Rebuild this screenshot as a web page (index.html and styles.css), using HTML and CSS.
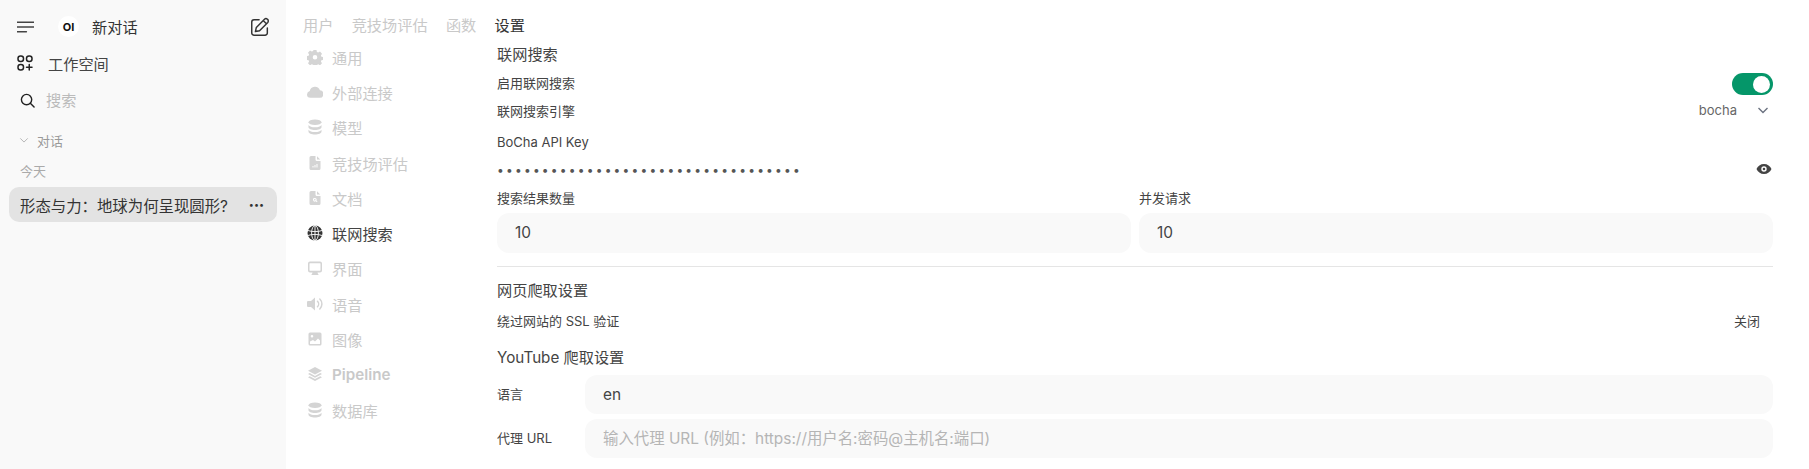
FILE: index.html
```html
<!DOCTYPE html>
<html lang="zh-CN">
<head>
    <meta charset="UTF-8">
    <title>设置</title>
    <link rel="stylesheet" href="styles.css">
</head>
<body>
    <aside class="sidebar">
        <div class="side-top">
            <svg class="icon-menu" viewBox="0 0 18 14" fill="none" stroke="#444" stroke-width="1.5" stroke-linecap="round"><path d="M0 2h18M0 7h18M0 12h10"/></svg>
            <span class="logo">OI</span>
            <span class="new-chat">新对话</span>
            <svg class="icon-edit" viewBox="0 0 24 24" fill="none" stroke="#333" stroke-width="1.600" stroke-linecap="round" stroke-linejoin="round"><path d="M20 3.500a2.200 2.200 0 0 0-3.100 0L8 12.500 7 17l4.500-1L20.500 7a2.400 2.400 0 0 0-.5-3.500zM15.500 5l3.500 3.500"/><path d="M11 4H5.500A2.500 2.500 0 0 0 3 6.500v12A2.500 2.500 0 0 0 5.500 21h12a2.500 2.500 0 0 0 2.500-2.500V13"/></svg>
        </div>
        <div class="side-row workspace">
            <svg viewBox="0 0 16 16" fill="none" stroke="#222" stroke-width="1.500" stroke-linecap="round"><rect x="1" y="1" width="5.500" height="5.500" rx="2.500"/><rect x="9.500" y="1" width="5.500" height="5.500" rx="2.500"/><rect x="1" y="9.500" width="5.500" height="5.500" rx="2.500"/><path d="M12.250 9.500v5.500M9.500 12.250h5.500"/></svg>
            <span>工作空间</span>
        </div>
        <div class="side-row search">
            <svg viewBox="0 0 16 16" fill="none" stroke="#222" stroke-width="1.500" stroke-linecap="round"><circle cx="7" cy="7" r="5.500"/><path d="M11 11l4 4"/></svg>
            <span>搜索</span>
        </div>
        <div class="side-group">
            <svg viewBox="0 0 12 12" fill="none" stroke="#aaa" stroke-width="1"><path d="M1.500 4l4.500 4.500L10.500 4"/></svg>
            <span>对话</span>
        </div>
        <div class="side-day">今天</div>
        <div class="chat-item">
            <span>形态与力：地球为何呈现圆形?</span>
            <span class="chat-more">•••</span>
        </div>
    </aside>

    <main class="main">
        <nav class="tabs">
            <span>用户</span>
            <span>竞技场评估</span>
            <span>函数</span>
            <span class="tab-on">设置</span>
        </nav>
        <div class="settings">
            <ul class="menu">
                <li><svg viewBox="0 0 16 16"><path fill-rule="evenodd" d="M6.500 1h3l.4 2 1.300.6 1.800-1 2 2.100-1.100 1.800.5 1.300 2 .4v2.600l-2 .5-.5 1.200 1.100 1.800-2 2-1.800-1-1.300.6-.4 1.900h-3l-.4-2-1.300-.5-1.800 1-2-2 1.100-1.800-.5-1.300-2-.4V7.200l2-.4.500-1.300-1.100-1.800 2-2.100 1.800 1 1.300-.6zM8 6a2.300 2.300 0 1 0 0 4.600A2.300 2.300 0 0 0 8 6z"/></svg>通用</li>
                <li><svg viewBox="0 0 16 16"><path d="M0 10.500A3.700 3.700 0 0 1 2.800 7 5.200 5.200 0 0 1 12.900 6.300 3.700 3.700 0 0 1 12.300 13.800H3.500A3.400 3.400 0 0 1 0 10.500z"/></svg>外部连接</li>
                <li><svg viewBox="0 0 16 16"><ellipse cx="8" cy="3.300" rx="6.500" ry="2.800"/><path d="M1.500 6c1 1.500 3.500 2.300 6.500 2.300s5.500-.8 6.500-2.300v2.200c0 1.600-2.900 2.800-6.500 2.800s-6.500-1.200-6.500-2.800zM1.500 10.800c1 1.500 3.500 2.300 6.500 2.300s5.500-.8 6.500-2.300v2c0 1.600-2.900 2.800-6.500 2.800s-6.500-1.200-6.500-2.800z"/></svg>模型</li>
                <li><svg viewBox="0 0 16 16"><path fill-rule="evenodd" d="M4 1h4.500v3.500A1.500 1.500 0 0 0 10 6h3.500v7.500A1.500 1.500 0 0 1 12 15H4a1.500 1.500 0 0 1-1.500-1.500v-11A1.500 1.500 0 0 1 4 1zM10 1.300 13.200 4.500H10zM5.500 11v1.500h1V11zM7.500 10v2.500h1V10zM9.500 9v3.500h1V9z"/></svg>竞技场评估</li>
                <li><svg viewBox="0 0 16 16"><path fill-rule="evenodd" d="M4 1h4.500v3.500A1.500 1.500 0 0 0 10 6h3.500v7.500A1.500 1.500 0 0 1 12 15H4a1.500 1.500 0 0 1-1.500-1.500v-11A1.500 1.500 0 0 1 4 1zM10 1.300 13.200 4.500H10zM7.800 8a1.800 1.800 0 1 0 1 3.300l1 1 .7-.7-1-1A1.800 1.800 0 0 0 7.800 8zm0 1a.8.8 0 1 1 0 1.600.8.8 0 0 1 0-1.600z"/></svg>文档</li>
                <li class="menu-on"><svg viewBox="0 0 16 16"><circle cx="8" cy="8" r="7.500"/><g fill="none" stroke="#fff" stroke-width=".9"><ellipse cx="8" cy="8" rx="3.400" ry="7.500"/><path d="M8 .5v15M1 5.500c2 .8 4.400 1.100 7 1.100s5-.3 7-1.100M1 10.500c2-.8 4.400-1.100 7-1.100s5 .3 7 1.100"/></g></svg>联网搜索</li>
                <li><svg viewBox="0 0 16 16"><path fill-rule="evenodd" d="M3 1.500h10a2 2 0 0 1 2 2v7a2 2 0 0 1-2 2h-2.500l.4 1.200.6.800v.5H4.500v-.5l.6-.8.4-1.200H3a2 2 0 0 1-2-2v-7a2 2 0 0 1 2-2zm0 1.800a.5.5 0 0 0-.5.5v6.400c0 .3.200.5.500.5h10c.3 0 .5-.2.500-.5V3.800a.5.5 0 0 0-.5-.5z"/></svg>界面</li>
                <li><svg viewBox="0 0 16 16"><path d="M8 1.500v13L4 11H1a1 1 0 0 1-1-1V6a1 1 0 0 1 1-1h3z"/><path d="M10.500 5.200a4 4 0 0 1 0 5.600M12.800 3a7 7 0 0 1 0 10" fill="none" stroke="#d4d4d4" stroke-width="1.500" stroke-linecap="round"/></svg>语音</li>
                <li><svg viewBox="0 0 16 16"><path fill-rule="evenodd" d="M3 1.500h10A1.500 1.500 0 0 1 14.500 3v10a1.500 1.500 0 0 1-1.500 1.500H3A1.500 1.500 0 0 1 1.500 13V3A1.500 1.500 0 0 1 3 1.500zM3 10.500V13h10V9.500l-2-2-3 3-2-1.500zM5 4a1.300 1.300 0 1 0 0 2.600A1.300 1.300 0 0 0 5 4z"/></svg>图像</li>
                <li class="menu-bold"><svg viewBox="0 0 16 16"><path d="M8 1l7 3.800-7 3.800-7-3.800zM2.700 7l5.300 2.900L13.300 7 15 8l-7 3.800L1 8zM2.700 10.200 8 13l5.300-2.800L15 11.200 8 15l-7-3.800z"/></svg>Pipeline</li>
                <li><svg viewBox="0 0 16 16"><ellipse cx="8" cy="3.300" rx="6.500" ry="2.800"/><path d="M1.500 6c1 1.500 3.500 2.300 6.500 2.300s5.500-.8 6.500-2.300v2.200c0 1.600-2.900 2.800-6.500 2.800s-6.500-1.200-6.500-2.800zM1.500 10.800c1 1.500 3.500 2.300 6.500 2.300s5.500-.8 6.500-2.300v2c0 1.600-2.900 2.800-6.500 2.800s-6.500-1.200-6.500-2.800z"/></svg>数据库</li>
            </ul>
            <section class="panel">
                <h3 class="head-first">联网搜索</h3>
                <div class="row row-toggle">
                    <span class="row-text">启用联网搜索</span>
                    <span class="toggle"><span class="knob"></span></span>
                </div>
                <div class="row row-engine">
                    <span>联网搜索引擎</span>
                    <span class="select">bocha
                        <svg viewBox="0 0 12 12" fill="none" stroke="#6b7280" stroke-width="1.400"><path d="M1.500 4l4.500 4.500L10.500 4"/></svg>
                    </span>
                </div>
                <div class="label label-key">BoCha API Key</div>
                <div class="row row-key">
                    <span class="dots">••••••••••••••••••••••••••••••••••</span>
                    <svg class="eye" viewBox="0 0 16 16" fill="#444"><path fill-rule="evenodd" d="M8 3c3.500 0 6.300 2.100 7.500 5-1.200 2.900-4 5-7.500 5S1.700 10.900.5 8C1.700 5.100 4.500 3 8 3zm0 2.300a2.700 2.700 0 1 0 0 5.400 2.700 2.700 0 0 0 0-5.400zM8 6.700a1.300 1.300 0 1 1 0 2.600 1.300 1.300 0 0 1 0-2.600z"/></svg>
                </div>
                <div class="two-col">
                    <div>
                        <div class="label">搜索结果数量</div>
                        <div class="field">10</div>
                    </div>
                    <div>
                        <div class="label">并发请求</div>
                        <div class="field">10</div>
                    </div>
                </div>
                <hr class="line">
                <h3>网页爬取设置</h3>
                <div class="row row-ssl">
                    <span>绕过网站的 SSL 验证</span>
                    <span class="off">关闭</span>
                </div>
                <h3 class="head-yt">YouTube 爬取设置</h3>
                <div class="row-field">
                    <span class="field-name">语言</span>
                    <div class="field">en</div>
                </div>
                <div class="row-field">
                    <span class="field-name">代理 URL</span>
                    <div class="field field-empty">输入代理 URL (例如：https://用户名:密码@主机名:端口)</div>
                </div>
            </section>
        </div>
    </main>
</body>
</html>
```

FILE: styles.css
```css
* {
    box-sizing: border-box;
}
html, body {
    margin: 0;
    height: 469px;
    overflow: hidden;
}
body {
    display: flex;
    background: #fff;
    color: #444;
    font-family: Inter, "Noto Sans CJK SC", sans-serif;
    font-size: 15.2px;
}
svg {
    display: block;
    flex: none;
}

/* sidebar */
.sidebar {
    width: 286px;
    flex: none;
    background: #f9f9f9;
    padding: 0 9px;
}
.side-top {
    display: flex;
    align-items: center;
    height: 53px;
    padding-left: 8px;
    color: #333;
}
.icon-menu {
    width: 17px;
    height: 14px;
}
.logo {
    width: 21px;
    height: 21px;
    margin-left: 24px;
    padding-top: 2px;
    border-radius: 50%;
    background: #fff;
    font-size: 11px;
    font-weight: 700;
    line-height: 19px;
    text-align: center;
    color: #111;
}
.new-chat {
    margin-left: 13px;
    padding-bottom: 2px;
}
.icon-edit {
    width: 22px;
    height: 22px;
    margin-left: auto;
    margin-right: 6px;
}
.side-row {
    display: flex;
    align-items: center;
    height: 36px;
    padding-left: 8px;
}
.side-row svg {
    width: 16px;
    height: 16px;
}
.workspace {
    margin-top: -8px;
    gap: 15px;
}
.search {
    gap: 11px;
    color: #bbb;
    padding-left: 11px;
}
.side-row.search svg {
    width: 15px;
    height: 15px;
    margin-top: 3px;
}
.side-group {
    display: flex;
    align-items: center;
    gap: 8px;
    height: 20px;
    margin-top: 13px;
    padding-left: 10px;
    font-size: 13px;
    color: #999;
}
.side-group svg {
    width: 10px;
    height: 10px;
}
.side-day {
    height: 20px;
    margin-top: 11px;
    padding-left: 11px;
    font-size: 13px;
    line-height: 20px;
    color: #aaa;
}
.chat-item {
    display: flex;
    align-items: center;
    justify-content: space-between;
    height: 35px;
    margin-top: 6px;
    padding: 0 13px 0 11px;
    border-radius: 10px;
    background: #e3e3e3;
    color: #333;
    font-size: 15.4px;
    white-space: nowrap;
}
.chat-more {
    font-size: 9px;
}

/* main */
.main {
    flex: 1;
    min-width: 0;
    padding-left: 17px;
    padding-right: 36px;
}
.tabs {
    display: flex;
    gap: 18.300px;
    height: 39px;
    padding-top: 15px;
    line-height: 22px;
    color: #c9c9c9;
}
.tab-on {
    color: #333;
}
.settings {
    display: flex;
}
.menu {
    width: 194px;
    flex: none;
    margin: 0;
    padding: 0;
    list-style: none;
    color: #c9c9c9;
}
.menu li {
    display: flex;
    align-items: center;
    gap: 9px;
    height: 35.300px;
    padding-left: 4px;
    white-space: nowrap;
}
.menu svg {
    width: 16px;
    height: 16px;
    fill: #d4d4d4;
}
.menu-on {
    color: #444;
}
.menu li.menu-on svg {
    fill: #333;
}
.menu-bold {
    font-weight: 600;
}
.panel {
    flex: 1;
    min-width: 0;
    padding-top: 6px;
}
h3 {
    margin: 0;
    font-size: 15.2px;
    font-weight: 400;
    line-height: 20px;
    color: #444;
}
.head-first {
    margin-bottom: 8px;
}
.row {
    display: flex;
    align-items: center;
    justify-content: space-between;
    font-size: 13px;
}
.row-toggle {
    height: 22px;
}
.row-text {
    padding-bottom: 3px;
}
.toggle {
    display: flex;
    justify-content: flex-end;
    align-items: center;
    width: 41px;
    height: 22px;
    padding: 0 3px;
    border-radius: 11px;
    background: #059669;
}
.knob {
    width: 17px;
    height: 17px;
    border-radius: 50%;
    background: #fff;
}
.row-engine {
    height: 22px;
    margin-top: 4px;
}
.select {
    display: flex;
    align-items: center;
    gap: 20px;
    padding-right: 4px;
    color: #666;
}
.select svg {
    width: 12px;
    height: 12px;
}
.label {
    font-size: 13px;
    line-height: 16px;
}
.label-key {
    margin-top: 13px;
}
.row-key {
    height: 20px;
    margin-top: 9px;
}
.dots {
    font-size: 12px;
    letter-spacing: 2.220px;
    color: #555;
}
.eye {
    width: 16px;
    height: 16px;
    margin-right: 1px;
}
.two-col {
    display: grid;
    grid-template-columns: 1fr 1fr;
    gap: 8px;
    margin-top: 11px;
}
.field {
    height: 40px;
    margin-top: 7px;
    padding-left: 18px;
    border-radius: 12px;
    background: #f9f9f9;
    font-size: 15.4px;
    line-height: 40px;
}
.field-empty {
    color: #b5b5b5;
}
.line {
    height: 1px;
    margin: 13px 0 14px;
    border: 0;
    background: #e5e5e5;
}
.row-ssl {
    height: 20px;
    margin-top: 9px;
}
.off {
    padding-right: 13px;
}
.head-yt {
    margin-top: 18px;
    margin-bottom: 7px;
}
.row-field {
    display: flex;
    align-items: center;
    margin-bottom: 5px;
}
.field-name {
    width: 88px;
    flex: none;
    font-size: 13px;
    padding-bottom: 3px;
}
.row-field .field {
    flex: 1;
    height: 39px;
    margin-top: 0;
    line-height: 39px;
}
```
